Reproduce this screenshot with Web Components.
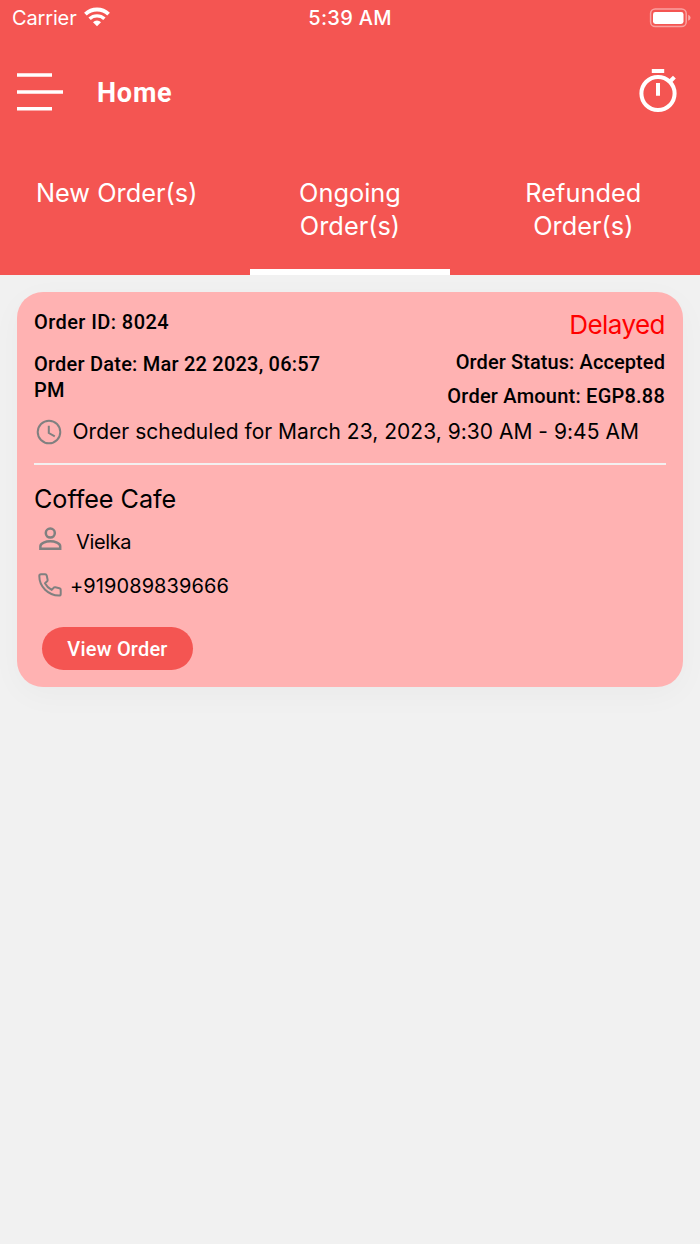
<!DOCTYPE html>
<html lang="en">
<head>
<meta charset="utf-8">
<title>Home</title>
<style>
    body{
        margin: 0;
        background: #f1f1f1;
        --brand: #f45552;
        --label: Roboto, "Noto Sans", sans-serif;
        font-family: Inter, "Liberation Sans", sans-serif;
        color: #000;
    }
</style>
</head>
<body>
<order-app></order-app>

<script>
const define = (name, html) => {
    const template = document.createElement("template");
    template.innerHTML = html;
    customElements.define(name, class extends HTMLElement{
        constructor(){
            super();
            this.attachShadow({mode: "open"});
            this.shadowRoot.appendChild(template.content.cloneNode(true));
        }
    });
};

define("status-bar", `
    <style>
        :host{
            display: grid;
            grid-template-columns: 1fr auto 1fr;
            align-items: center;
            height: 36px;
            padding: 0 9px 0 12px;
            box-sizing: border-box;
            color: #fff;
            font-size: 20px;
            line-height: 36px;
        }
        .carrier{ display: flex; align-items: center; gap: 7px; letter-spacing: -0.15px; }
        .carrier svg{ margin-top: -2px; }
        .time{ font-weight: 500; letter-spacing: 0.3px; margin-right: 3px; }
        .battery{ justify-self: end; margin-top: -1px; }
        svg{ display: block; }
    </style>
    <div class="carrier">
        <span>Carrier</span>
        <svg width="26" height="20" viewBox="0 0 26 20" fill="none" stroke="#fff">
            <path d="M1.4 7.2a16.7 16.7 0 0 1 23.2 0" stroke-width="3.8"/>
            <path d="M5.6 11.8a10.8 10.8 0 0 1 14.8 0" stroke-width="3.4"/>
            <path d="M13 19.2l-4-4a5.8 5.8 0 0 1 8 0z" fill="#fff" stroke="none"/>
        </svg>
    </div>
    <div class="time">5:39 AM</div>
    <svg class="battery" width="42" height="20" viewBox="0 0 42 20">
        <rect x="1.6" y="1" width="35.6" height="17.6" rx="4.6" fill="none" stroke="#fff" stroke-opacity=".45" stroke-width="1.5"/>
        <rect x="4" y="4" width="30.5" height="12" rx="2.4" fill="#fff"/>
        <path d="M39.2 6.8q2.4 1 2.4 3t-2.4 3z" fill="#fff" fill-opacity=".5"/>
    </svg>
`);

define("nav-bar", `
    <style>
        :host{
            display: flex;
            align-items: center;
            height: 111px;
            padding: 0 23px 0 17px;
            box-sizing: border-box;
            color: #fff;
        }
        .title{
            flex: 1;
            margin-left: 34px;
            padding-top: 2px;
            font: 700 27px/36px var(--label);
            letter-spacing: 0.8px;
        }
        svg{ display: block; }
        .timer{ margin-top: -2px; }
    </style>
    <svg width="46" height="38" viewBox="0 0 46 38" stroke="#fff" stroke-width="3.6">
        <path d="M0 2h35M0 19h46M0 35.8h35"/>
    </svg>
    <div class="title"><slot></slot></div>
    <svg class="timer" width="38" height="44" viewBox="0 0 38 44" fill="none" stroke="#fff" stroke-width="4">
        <circle cx="19" cy="24.5" r="16.6"/>
        <path d="M12.8 2h12.4M19 14v12.8M31 12.5l4.4-4.4"/>
    </svg>
`);

define("tab-item", `
    <style>
        :host{
            flex: 1;
            display: flex;
            flex-direction: column;
            justify-content: space-between;
            align-items: center;
            color: #fff;
            font-size: 25.3px;
            line-height: 33px;
            text-align: center;
            letter-spacing: 0.03px;
        }
        .text{ padding: 29px 32px 0; }
        .bar{ width: 200px; height: 5.5px; }
        :host([active]) .bar{ background: #fff; }
    </style>
    <div class="text"><slot></slot></div>
    <div class="bar"></div>
`);

define("tab-bar", `
    <style>
        :host{ display: flex; height: 127.5px; }
    </style>
    <slot></slot>
`);

define("icon-row", `
    <style>
        :host{ display: flex; align-items: center; }
        ::slotted(svg){ display: block; flex: none; }
    </style>
    <slot name="icon"></slot>
    <span><slot></slot></span>
`);

define("pill-button", `
    <style>
        :host{ display: block; }
        button{
            width: 151px;
            height: 43px;
            padding: 0;
            border: 0;
            border-radius: 22px;
            background: var(--brand);
            color: #fff;
            font: 500 20px/44px var(--label);
            letter-spacing: 0.2px;
        }
    </style>
    <button><slot></slot></button>
`);

define("order-card", `
    <style>
        :host{
            display: block;
            height: 395px;
            margin: 17px 17px 0;
            padding: 17px;
            box-sizing: border-box;
            border-radius: 26px;
            background: #ffb2b2;
            box-shadow: 0 8px 32px rgba(0, 0, 0, 0.03);
        }
        .summary{ display: flex; justify-content: space-between; height: 104px; }
        .label{ font: 500 20px/26px var(--label); letter-spacing: 0.22px; }
        .left{ width: 300px; }
        .id{ letter-spacing: 0.42px; }
        .date{ margin-top: 16px; }
        .right{ text-align: right; margin-right: 1px; }
        .state{ color: #f00; font-size: 26px; line-height: 32px; letter-spacing: -0.55px; }
        .status{ margin-top: 8px; letter-spacing: 0.09px; }
        .amount{ margin-top: 8px; }
        .schedule{ height: 38px; gap: 11px; font-size: 21px; letter-spacing: 0.02px; padding-left: 1.5px; white-space: nowrap; }
        hr{ height: 2px; margin: 12px 0 0; border: 0; background: #f3f0f0; }
        .shop{ margin-top: 17px; font-size: 25.2px; line-height: 34px; letter-spacing: -0.05px; }
        .person{ height: 44px; margin-top: 4px; padding-left: 5px; gap: 14px; font-size: 20px; letter-spacing: -0.35px; }
        .person svg{ margin-top: -6px; }
        .phone{ height: 44px; padding-left: 4px; gap: 8px; font-size: 20px; letter-spacing: 0.08px; }
        .phone svg{ margin-top: -1px; }
        pill-button{ margin: 19px 0 0 8px; }
    </style>
    <div class="summary">
        <div class="left">
            <div class="label id">Order ID: 8024</div>
            <div class="label date">Order Date: Mar 22 2023, 06:57 PM</div>
        </div>
        <div class="right">
            <div class="state">Delayed</div>
            <div class="label status">Order Status: Accepted</div>
            <div class="label amount">Order Amount: EGP8.88</div>
        </div>
    </div>
    <icon-row class="schedule">
        <svg slot="icon" width="26" height="26" viewBox="0 0 26 26" fill="none" stroke="#808080" stroke-width="2">
            <circle cx="13" cy="13" r="11.3"/>
            <path d="M12.8 6.8v7.2l6 3.4"/>
        </svg>
        Order scheduled for March 23, 2023, 9:30 AM - 9:45 AM
    </icon-row>
    <hr>
    <div class="shop">Coffee Cafe</div>
    <icon-row class="person">
        <svg slot="icon" width="23" height="24" viewBox="0 0 23 24" fill="none" stroke="#808080" stroke-width="2.5">
            <circle cx="11.3" cy="6.1" r="4.5"/>
            <path d="M1.4 21.8v-2.5c0-3 5.4-5 9.9-5s9.9 2 9.9 5v2.5z"/>
        </svg>
        Vielka
    </icon-row>
    <icon-row class="phone">
        <svg slot="icon" width="24" height="24" viewBox="0 0 24 24" fill="none" stroke="#808080" stroke-width="2" stroke-linejoin="round">
            <path d="M3 1.3h4.2q1.2 0 1.5 1.2l.9 4.1q.2 1-.5 1.7L7 10.2q2.3 4.4 6.7 6.7l1.9-2.1q.7-.7 1.7-.5l4.1.9q1.3.3 1.3 1.5v4.3q0 1.6-1.7 1.6Q12.8 22.3 7.1 16.7 1.3 11 1.3 3 1.3 1.3 3 1.3z"/>
        </svg>
        +919089839666
    </icon-row>
    <pill-button>View Order</pill-button>
`);

define("order-app", `
    <style>
        :host{ display: block; min-height: 1244px; }
        header{ background: var(--brand); }
    </style>
    <header>
        <status-bar></status-bar>
        <nav-bar>Home</nav-bar>
        <tab-bar>
            <tab-item>New Order(s)</tab-item>
            <tab-item active>Ongoing Order(s)</tab-item>
            <tab-item>Refunded Order(s)</tab-item>
        </tab-bar>
    </header>
    <order-card></order-card>
`);
</script>
</body>
</html>
